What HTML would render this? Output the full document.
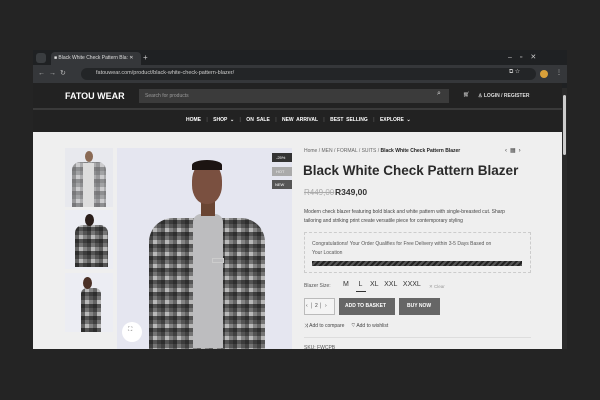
<!DOCTYPE html>
<html><head><meta charset="utf-8"><style>
*{margin:0;padding:0;box-sizing:border-box}
body{width:600px;height:400px;background:#242424;font-family:"Liberation Sans",sans-serif;position:relative;overflow:hidden}
.a{position:absolute}
.t{position:absolute;white-space:nowrap}
.chk{background:
repeating-linear-gradient(90deg,rgba(40,40,40,.55) 0 4px,rgba(240,240,240,.25) 4px 8px,rgba(90,90,90,.45) 8px 12px),
repeating-linear-gradient(0deg,#555 0 4px,#bbb 4px 8px,#777 8px 12px);background-blend-mode:multiply}
</style></head><body>
<div class="a" style="left:33px;top:50px;width:534px;height:300px;background:#1f2123"></div>
<div class="a" style="left:36px;top:53px;width:10px;height:10px;border-radius:3px;background:#3a3d40"></div>
<div class="a" style="left:51px;top:52px;width:90px;height:13px;background:#35373a;border-radius:4px 4px 0 0"></div>
<div class="t" style="left:54px;top:55px;font-size:5px;color:#ddd">■ Black White Check Pattern Bla: ✕</div>
<div class="t" style="left:143px;top:53px;font-size:8px;color:#ccc">+</div>
<div class="t" style="left:508px;top:53px;font-size:7px;color:#ccc;letter-spacing:8px">–▫✕</div>
<div class="a" style="left:33px;top:65px;width:534px;height:18px;background:#35373a"></div>
<div class="t" style="left:38px;top:69px;font-size:7px;color:#bbb;letter-spacing:4px">←→↻</div>
<div class="a" style="left:81px;top:68px;width:455px;height:12px;background:#232527;border-radius:6px"></div>
<div class="t" style="left:96px;top:70px;font-size:5.5px;color:#ccc">fatouwear.com/product/black-white-check-pattern-blazer/</div>
<div class="t" style="left:509px;top:69px;font-size:6px;color:#ccc">⧉ ☆</div>
<div class="a" style="left:540px;top:70px;width:8px;height:8px;border-radius:50%;background:#d9a03a"></div>
<div class="t" style="left:556px;top:69px;font-size:6px;color:#ccc">⋮</div>
<div class="a" style="left:33px;top:83px;width:529px;height:26px;background:#222"></div>
<div class="t" style="left:65px;top:91px;font-size:9px;font-weight:bold;color:#fff">FATOU WEAR</div>
<div class="a" style="left:139px;top:89px;width:310px;height:14px;background:#3b3b3b"></div>
<div class="t" style="left:145px;top:93px;font-size:5px;color:#999">Search for products</div>
<div class="t" style="left:437px;top:90px;font-size:7px;color:#ddd">⌕</div>
<div class="t" style="left:463px;top:92px;font-size:5.5px;color:#ddd">🛒&#xFE0E;</div>
<div class="t" style="left:478px;top:93px;font-size:5px;color:#ddd;font-weight:bold">♙ LOGIN / REGISTER</div>
<div class="a" style="left:33px;top:108px;width:529px;height:2px;background:#3a3a3a"></div>
<div class="a" style="left:33px;top:110px;width:529px;height:22px;background:#222"></div>
<div class="t" style="left:186px;top:117px;font-size:5px;font-weight:bold;color:#fff;word-spacing:1.3px">HOME &nbsp;<span style="color:#555">|</span>&nbsp; SHOP ⌄ &nbsp;<span style="color:#555">|</span>&nbsp; ON SALE &nbsp;<span style="color:#555">|</span>&nbsp; NEW ARRIVAL &nbsp;<span style="color:#555">|</span>&nbsp; BEST SELLING &nbsp;<span style="color:#555">|</span>&nbsp; EXPLORE ⌄</div>
<div class="a" style="left:562px;top:88px;width:5px;height:262px;background:#2a2a2a"></div>
<div class="a" style="left:563px;top:95px;width:3px;height:60px;background:#ccc;border-radius:2px"></div>
<div class="a" style="left:33px;top:132px;width:529px;height:217px;background:#efefef"></div>
<!-- thumbnails -->
<div class="a" style="left:65px;top:148px;width:48px;height:59px;background:#e8e9ee;overflow:hidden">
<div class="a chk" style="left:7px;top:14px;width:34px;height:45px;border-radius:8px 8px 0 0;opacity:.6"></div>
<div class="a" style="left:18px;top:15px;width:11px;height:44px;background:#ddd"></div>
<div class="a" style="left:20px;top:3px;width:8px;height:11px;border-radius:50%;background:#8a6a55"></div></div>
<div class="a" style="left:65px;top:210px;width:48px;height:59px;background:#ecedf3;overflow:hidden">
<div class="a chk" style="left:10px;top:15px;width:33px;height:42px;border-radius:8px 8px 0 0"></div>
<div class="a" style="left:20px;top:4px;width:9px;height:12px;border-radius:50%;background:#2a1e1a"></div></div>
<div class="a" style="left:65px;top:273px;width:48px;height:59px;background:#ecedf3;overflow:hidden">
<div class="a chk" style="left:16px;top:15px;width:20px;height:44px;border-radius:6px 6px 0 0"></div>
<div class="a" style="left:18px;top:4px;width:9px;height:12px;border-radius:50%;background:#4a3026"></div></div>
<!-- main image -->
<div class="a" style="left:117px;top:148px;width:175px;height:201px;background:#e5e6f0;overflow:hidden">
<div class="a" style="left:35px;top:140px;width:18px;height:60px;background:#5a3a2c;border-radius:8px"></div>
<div class="a" style="left:128px;top:140px;width:18px;height:60px;background:#5a3a2c;border-radius:8px"></div>
<div class="a chk" style="left:32px;top:70px;width:116px;height:138px;border-radius:24px 24px 6px 6px"></div>
<div class="a" style="left:76px;top:66px;width:30px;height:134px;background:#bdbdbf;border-radius:8px 8px 0 0"></div>
<div class="a" style="left:84px;top:50px;width:14px;height:18px;background:#6a4533"></div>
<div class="a" style="left:75px;top:14px;width:30px;height:42px;border-radius:45%;background:#7a5040"></div>
<div class="a" style="left:75px;top:12px;width:30px;height:10px;border-radius:50% 50% 0 0;background:#1c1412"></div>
<div class="a" style="left:95px;top:110px;width:12px;height:5px;border:1px solid #ccc"></div>
</div>
<div class="a" style="left:122px;top:322px;width:20px;height:20px;border-radius:50%;background:#fff"></div>
<div class="t" style="left:128px;top:327px;font-size:6px;color:#666">⛶</div>
<div class="a" style="left:272px;top:153px;width:20px;height:9px;background:#333"></div>
<div class="t" style="left:276px;top:155px;font-size:4px;color:#fff">-25%</div>
<div class="a" style="left:272px;top:167px;width:20px;height:9px;background:#aaa"></div>
<div class="t" style="left:276px;top:169px;font-size:4px;color:#eee">HOT</div>
<div class="a" style="left:272px;top:180px;width:20px;height:9px;background:#555"></div>
<div class="t" style="left:275px;top:182px;font-size:4px;color:#fff">NEW</div>
<!-- details -->
<div class="t" style="left:304px;top:148px;font-size:5px;color:#666">Home / MEN / FORMAL / SUITS / <b style="color:#222">Black White Check Pattern Blazer</b></div>
<div class="t" style="left:505px;top:147px;font-size:6px;color:#444;letter-spacing:3px">‹▦›</div>
<div class="t" style="left:303px;top:163px;font-size:13.5px;font-weight:bold;color:#2a2a2a">Black White Check Pattern Blazer</div>
<div class="t" style="left:304px;top:188px;font-size:8px;color:#aaa;text-decoration:line-through">R449,00</div>
<div class="t" style="left:335px;top:187px;font-size:8.5px;color:#333;font-weight:bold">R349,00</div>
<div class="t" style="left:304px;top:208px;font-size:5px;color:#444;line-height:9px">Modern check blazer featuring bold black and white pattern with single-breasted cut. Sharp<br>tailoring and striking print create versatile piece for contemporary styling</div>
<div class="a" style="left:304px;top:232px;width:227px;height:41px;border:1px dashed #ccc"></div>
<div class="t" style="left:312px;top:240px;font-size:5px;color:#555;line-height:9px">Congratulations! Your Order Qualifies for Free Delivery within 3-5 Days Based on<br>Your Location</div>
<div class="a" style="left:312px;top:261px;width:210px;height:5px;background:repeating-linear-gradient(135deg,#222 0 2px,#555 2px 4px)"></div>
<div class="t" style="left:304px;top:283px;font-size:5px;color:#555">Blazer Size:</div>
<div class="t" style="left:343px;top:281px;font-size:7px;color:#333">M &nbsp;&nbsp;&nbsp;&nbsp;L &nbsp;&nbsp;&nbsp;XL &nbsp;&nbsp;XXL &nbsp;&nbsp;XXXL</div>
<div class="a" style="left:356px;top:291px;width:10px;height:1px;background:#333"></div>
<div class="t" style="left:429px;top:284px;font-size:4.5px;color:#999">✕ Clear</div>
<div class="a" style="left:304px;top:298px;width:31px;height:17px;border:1px solid #bbb;background:#f4f4f4"></div>
<div class="t" style="left:306px;top:303px;font-size:5px;color:#444">‹ &nbsp;│ 2 │ &nbsp;›</div>
<div class="a" style="left:339px;top:298px;width:56px;height:17px;background:#666"></div>
<div class="t" style="left:345px;top:303px;font-size:5px;color:#fff;font-weight:bold">ADD TO BASKET</div>
<div class="a" style="left:399px;top:298px;width:41px;height:17px;background:#666"></div>
<div class="t" style="left:407px;top:303px;font-size:5px;color:#fff;font-weight:bold">BUY NOW</div>
<div class="t" style="left:304px;top:323px;font-size:5px;color:#444">⤨ Add to compare &nbsp;&nbsp;&nbsp; ♡ Add to wishlist</div>
<div class="a" style="left:304px;top:337px;width:227px;height:1px;background:#ddd"></div>
<div class="t" style="left:304px;top:345px;font-size:5px;color:#555">SKU: FWCPB</div>
<div class="a" style="left:0;top:349px;width:600px;height:51px;background:#242424"></div>
</body></html>
